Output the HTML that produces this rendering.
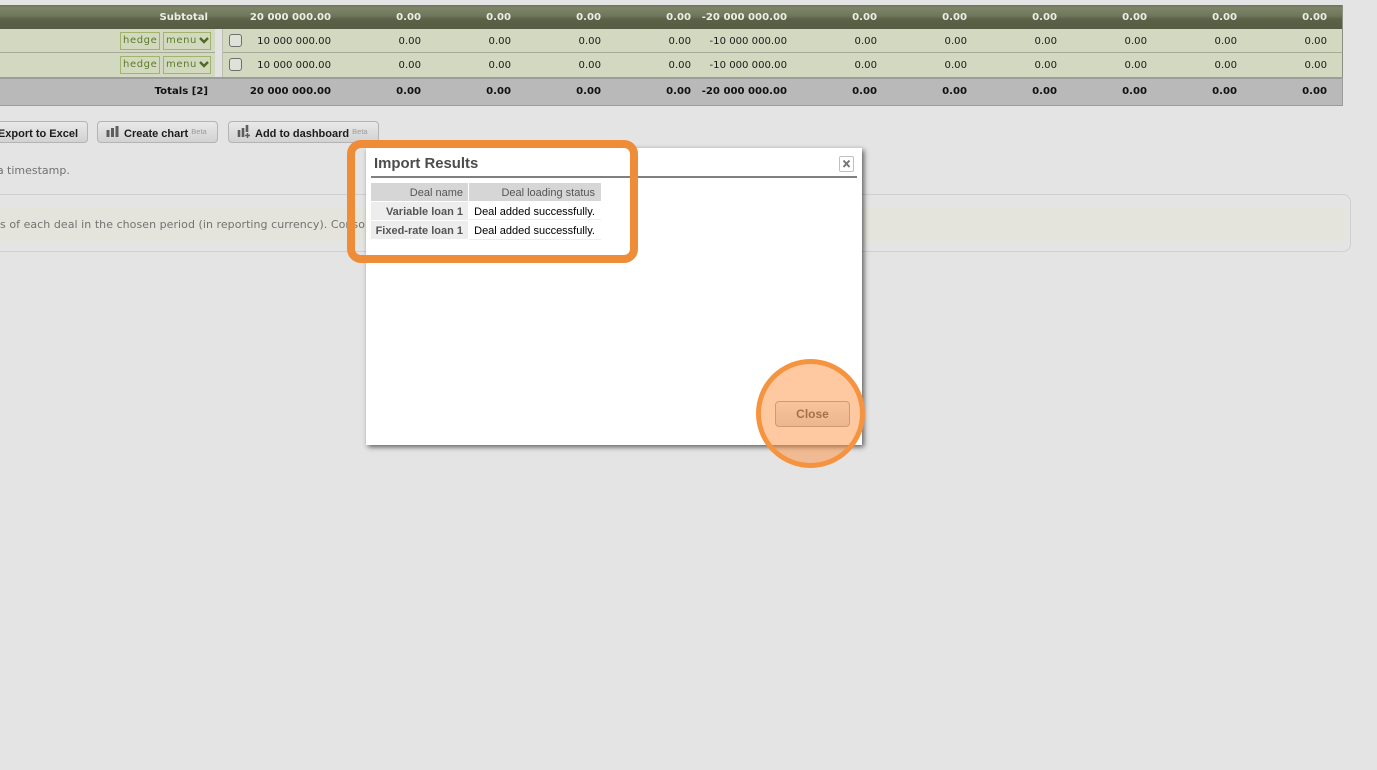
<!DOCTYPE html>
<html><head><meta charset="utf-8"><style>
html,body{margin:0;padding:0;width:1377px;height:770px;overflow:hidden;background:#e4e4e4}
body{position:relative;font-family:"DejaVu Sans",sans-serif}
.a{position:absolute}
.row{position:absolute;left:0;width:1342px;border-right:1px solid #8c8f80;box-sizing:content-box}
.n{position:absolute;width:120px;text-align:right;font-size:10.1px;line-height:14px;white-space:nowrap}
.btn{position:absolute;top:121px;height:20px;border:1px solid #b4b4b4;border-radius:4px;background:linear-gradient(#e9e9e9,#d2d2d2);font:bold 11px/25px "Liberation Sans",sans-serif;color:#1c1c1c;white-space:nowrap;box-sizing:content-box}
.beta{font:normal 7.5px "Liberation Sans",sans-serif;color:#9a9a9a;vertical-align:3px}
.tag{position:absolute;height:18px;border:1px solid #a3b36e;background:#d3d9bf;color:#5c7a2a;font-size:10px;line-height:16px;letter-spacing:.6px;box-sizing:border-box;white-space:nowrap;padding-left:2px}
.cb{position:absolute;left:229px;width:11px;height:11px;border:1px solid #6e6e6e;border-radius:3px;background:#e0e2da}
.t{position:absolute;font:11px/20px "Liberation Sans",sans-serif;white-space:nowrap;box-sizing:border-box}
</style></head><body>

<!-- header row -->
<div class="row" style="top:5px;height:24px;background:linear-gradient(#6e7456 0,#7d8468 3px,#6f755a 11px,#5c6247 14px,#565c43 24px)"></div>
<div class="row" style="top:29px;height:23px;background:#d3d9c1;border-bottom:1px solid #a7aa98"></div>
<div class="row" style="top:53px;height:24px;background:#d3d9c1"></div>
<div class="row" style="top:77px;width:1343px;height:29px;background:#b9b9b9;border-top:2px solid #9d9d9d;border-bottom:1px solid #9c9c9c;border-right:1px solid #9c9c9c;box-sizing:border-box"></div>
<div class="a" style="left:215px;top:29px;width:7px;height:48px;background:#e2e2e0;border-right:1px solid #bcbcb0"></div>

<div id="nums"></div>

<div class="tag" style="left:120px;top:32px;width:40px">hedge</div>
<div class="tag" style="left:163px;top:32px;width:48px">menu</div>
<div class="tag" style="left:120px;top:56px;width:40px">hedge</div>
<div class="tag" style="left:163px;top:56px;width:48px">menu</div>
<svg class="a" style="left:198px;top:36px" width="12" height="9"><path d="M2 2l4 4 4-4" fill="none" stroke="#4f6a22" stroke-width="2.4"/></svg>
<svg class="a" style="left:198px;top:60px" width="12" height="9"><path d="M2 2l4 4 4-4" fill="none" stroke="#4f6a22" stroke-width="2.4"/></svg>
<div class="cb" style="top:34px"></div>
<div class="cb" style="top:58px"></div>

<!-- buttons -->
<div class="btn" style="left:-10px;width:96px;text-align:right"><span style="margin-right:9px">Export to Excel</span></div>
<div class="btn" style="left:97px;width:119px"><span style="position:absolute;left:26px">Create chart <span class="beta">Beta</span></span></div>
<div class="btn" style="left:228px;width:149px"><span style="position:absolute;left:26px">Add to dashboard <span class="beta">Beta</span></span></div>
<svg class="a" style="left:106px;top:125px" width="14" height="14"><path d="M2 5v7M6.500 3v9M11 1v11" stroke="#5d5d5d" stroke-width="3" fill="none"/></svg>
<svg class="a" style="left:237px;top:124px" width="16" height="15"><path d="M2 6v7M6 4v9M10 1v7" stroke="#5d5d5d" stroke-width="2.600" fill="none"/><path d="M10.500 9v5M8 11.500h5" stroke="#5d5d5d" stroke-width="1.500" fill="none"/></svg>

<!-- notes -->
<div class="a" style="left:7px;top:164px;font-size:11px;line-height:14px;color:#727272;white-space:nowrap">timestamp.</div>
<div class="a" style="left:-3px;top:164px;font-size:11px;line-height:14px;color:#727272">a</div>
<div class="a" style="left:-10px;top:194px;width:1361px;height:58px;border:1px solid #cfcfcf;border-radius:8px;box-sizing:border-box"></div>
<div class="a" style="left:0;top:207px;width:1345px;height:34px;background:#e4e4dc"></div>
<div class="a" style="left:0;top:218px;font-size:11px;line-height:14px;color:#727272;white-space:nowrap;letter-spacing:.05px">s of each deal in the chosen period (in reporting currency). Conso</div>

<!-- dialog -->
<div class="a" style="left:366px;top:148px;width:496px;height:297px;background:#fff;box-shadow:2px 2px 5px rgba(0,0,0,.6)"></div>
<div class="a" style="left:374px;top:155px;font:bold 14.900px/18px 'Liberation Sans',sans-serif;color:#4c4c4c;white-space:nowrap">Import Results</div>
<div class="a" style="left:371px;top:176px;width:486px;height:2px;background:#808080"></div>
<div class="a" style="left:839px;top:156px;width:13px;height:14px;border:1px solid #c0c0c0;border-radius:2px"></div>
<svg class="a" style="left:840px;top:157px" width="14" height="14"><path d="M3.500 3.500l6 6.500M9.500 3.500l-6 6.500" stroke="#777" stroke-width="2" fill="none"/></svg>

<div class="t" style="left:371px;top:183px;width:97px;height:18px;background:#d6d6d6;color:#555;text-align:right;padding-right:5px">Deal name</div>
<div class="t" style="left:469px;top:183px;width:132px;height:18px;background:#d6d6d6;color:#555;text-align:right;padding-right:6px">Deal loading status</div>
<div class="t" style="left:371px;top:202px;width:97px;height:18px;background:#ededed;color:#555;font-weight:bold;text-align:right;padding-right:5px">Variable loan 1</div>
<div class="t" style="left:469px;top:202px;width:132px;height:18px;color:#000;text-align:right;padding-right:6px;border-bottom:1px solid #eee">Deal added successfully.</div>
<div class="t" style="left:371px;top:221px;width:97px;height:18px;background:#ededed;color:#555;font-weight:bold;text-align:right;padding-right:5px">Fixed-rate loan 1</div>
<div class="t" style="left:469px;top:221px;width:132px;height:19px;color:#000;text-align:right;padding-right:6px;border-bottom:1px solid #eee">Deal added successfully.</div>

<div class="a" style="left:775px;top:401px;width:75px;height:26px;box-sizing:border-box;border:1px solid #a8a8a8;border-radius:4px;background:linear-gradient(#f4f4f4,#dcdcdc);font:bold 12px/24px 'Liberation Sans',sans-serif;color:#555;text-align:center">Close</div>

<!-- highlights -->
<div class="a" style="left:347px;top:140px;width:291px;height:123px;box-sizing:border-box;border:8px solid #ef8c38;border-radius:14px"></div>
<div class="a" style="left:756px;top:359px;width:109px;height:109px;box-sizing:border-box;border:5px solid #f6933f;border-radius:50%;background:rgba(252,143,58,.48)"></div>

<script>
var R=[331,421,511,601,691,787,877,967,1057,1147,1237,1327],h='';
function rw(top,vals,st,label){
 if(label)h+='<div class="n" style="left:'+(208-120)+'px;top:'+top+'px;'+st+'">'+label+'</div>';
 R.forEach(function(r,i){var v='0.00';if(i==0)v=vals[0];if(i==5)v=vals[1];
 h+='<div class="n" style="left:'+(r-120)+'px;top:'+top+'px;'+st+'">'+v+'</div>';});
}
rw(11,['20 000 000.00','-20 000 000.00'],'color:#eceee4;font-weight:bold','Subtotal');
rw(35,['10 000 000.00','-10 000 000.00'],'color:#1a1a1a');
rw(59,['10 000 000.00','-10 000 000.00'],'color:#1a1a1a');
rw(85,['20 000 000.00','-20 000 000.00'],'color:#111;font-weight:bold','Totals [2]');
document.getElementById('nums').innerHTML=h;
</script>
</body></html>
